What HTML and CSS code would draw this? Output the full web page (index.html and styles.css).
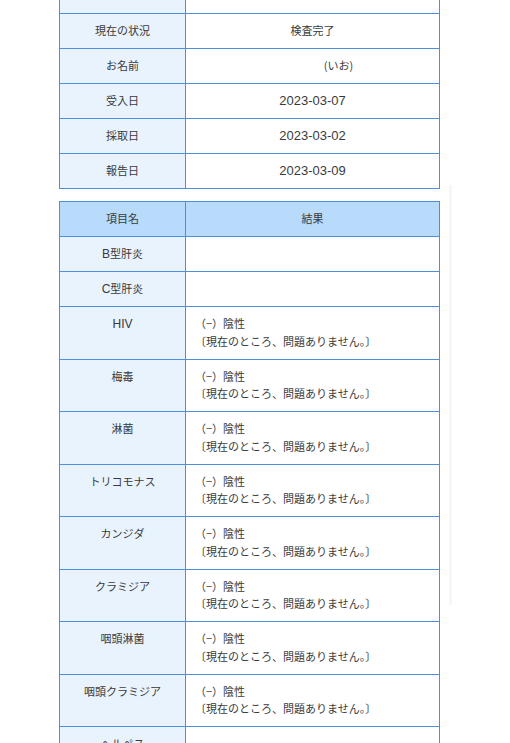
FILE: index.html
```html
<!DOCTYPE html>
<html lang="ja">
<head>
<meta charset="utf-8">
<link rel="stylesheet" href="styles.css">
</head>
<body>
<div class="page">
  <table class="info">
    <tr><th>&nbsp;</th><td>&nbsp;</td></tr>
    <tr><th>現在の状況</th><td>検査完了</td></tr>
    <tr><th>お名前</th><td><span class="name-pad"></span>(いお)</td></tr>
    <tr><th>受入日</th><td><span class="num">2023-03-07</span></td></tr>
    <tr><th>採取日</th><td><span class="num">2023-03-02</span></td></tr>
    <tr><th>報告日</th><td><span class="num">2023-03-09</span></td></tr>
  </table>

  <table class="results">
    <tr class="head"><th>項目名</th><th>結果</th></tr>
    <tr><th><span class="lat">B</span>型肝炎</th><td></td></tr>
    <tr><th><span class="lat">C</span>型肝炎</th><td></td></tr>
    <tr><th><span class="lat">HIV</span></th><td>（−）陰性<br>〔現在のところ、問題ありません。〕</td></tr>
    <tr><th>梅毒</th><td>（−）陰性<br>〔現在のところ、問題ありません。〕</td></tr>
    <tr><th>淋菌</th><td>（−）陰性<br>〔現在のところ、問題ありません。〕</td></tr>
    <tr><th>トリコモナス</th><td>（−）陰性<br>〔現在のところ、問題ありません。〕</td></tr>
    <tr><th>カンジダ</th><td>（−）陰性<br>〔現在のところ、問題ありません。〕</td></tr>
    <tr><th>クラミジア</th><td>（−）陰性<br>〔現在のところ、問題ありません。〕</td></tr>
    <tr><th>咽頭淋菌</th><td>（−）陰性<br>〔現在のところ、問題ありません。〕</td></tr>
    <tr><th>咽頭クラミジア</th><td>（−）陰性<br>〔現在のところ、問題ありません。〕</td></tr>
    <tr><th>ヘルペス</th><td></td></tr>
  </table>
</div>
<div class="scroll-track"></div>
</body>
</html>
```
FILE: styles.css
```css
html, body {
  margin: 0;
  padding: 0;
  background: #ffffff;
}
body {
  font-family: "Noto Sans CJK JP", "Noto Sans", sans-serif;
  color: #3a3a3a;
  font-size: 11px;
  overflow: hidden;
  height: 743px;
  position: relative;
}
.page {
  padding-left: 59px;
  margin-top: -22px;
}
table {
  border-collapse: collapse;
  width: 381px;
  table-layout: fixed;
}
th, td {
  border: 1px solid #4a90dc;
  padding: 8.25px 0;
  line-height: 17.5px;
  height: 17.5px;
  font-weight: normal;
  vertical-align: top;
  overflow: hidden;
}
th {
  width: 125px;
  background: #e8f3fe;
  text-align: center;
}
.num {
  font-family: "Liberation Sans", "Noto Sans CJK JP", sans-serif;
  font-size: 13px;
  line-height: 1;
}
.lat {
  font-family: "Liberation Sans", "Noto Sans CJK JP", sans-serif;
  font-size: 12px;
  line-height: 1;
}
.info td {
  text-align: center;
  background: #ffffff;
}
.name-pad {
  display: inline-block;
  width: 52px;
}
.results {
  margin-top: 12px;
}
.results td {
  text-align: left;
  padding-left: 9px;
  background: #ffffff;
}
.results .head th {
  background: #b8dafb;
}
.results .head th + th {
  width: auto;
  text-align: center;
  padding-left: 0;
}
.scroll-track {
  position: absolute;
  left: 449px;
  top: 185px;
  width: 3px;
  height: 420px;
  background: #f6f6f6;
}
```
